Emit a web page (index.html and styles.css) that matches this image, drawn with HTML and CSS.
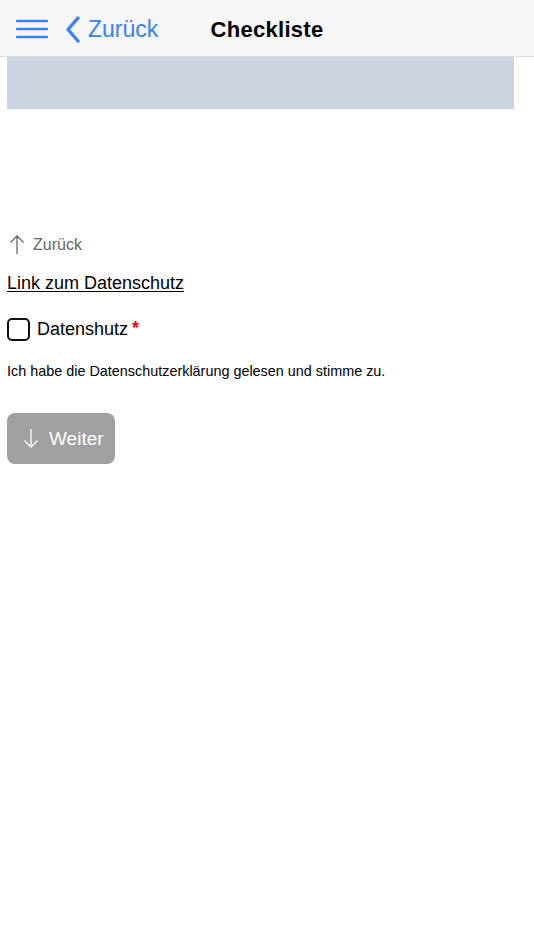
FILE: index.html
```html
<!DOCTYPE html>
<html lang="de">
<head>
    <meta charset="UTF-8">
    <meta name="viewport" content="width=device-width, initial-scale=1.0">
    <title>Checkliste</title>
    <link rel="stylesheet" href="styles.css">
</head>
<body>
    <!-- Top bar -->
    <header class="topbar">
        <div class="topbar-left">
            <svg class="menu-icon" width="32" height="20" viewBox="0 0 32 20">
                <path d="M1 2h30M1 10h30M1 18h30" stroke="#3b82f6" stroke-width="2.6" stroke-linecap="round"/>
            </svg>
            <a class="back-link" href="#">
                <svg width="16" height="27" viewBox="0 0 16 27">
                    <path d="M13 2L3 13.5L13 25" fill="none" stroke="#3b82f6" stroke-width="3.4" stroke-linecap="round" stroke-linejoin="round"/>
                </svg>
                <span>Zurück</span>
            </a>
        </div>
        <h1 class="title">Checkliste</h1>
    </header>

    <div class="banner"></div>

    <main class="content">
        <a class="step-back" href="#">
            <svg width="16" height="19" viewBox="0 0 16 19">
                <path d="M8 1v18M1.5 7.5L8 1l6.5 6.5" fill="none" stroke="#666" stroke-width="1.3"/>
            </svg>
            <span>Zurück</span>
        </a>

        <a class="privacy-link" href="#">Link zum Datenschutz</a>

        <label class="check-row">
            <span class="checkbox"></span>
            <span>Datenshutz</span>
            <span class="required">*</span>
        </label>

        <p class="note">Ich habe die Datenschutzerklärung gelesen und stimme zu.</p>

        <button class="next-button" disabled>
            <svg width="16" height="19" viewBox="0 0 16 19">
                <path d="M8 0v18M1.5 11.5L8 18l6.5-6.5" fill="none" stroke="#fff" stroke-width="1.3"/>
            </svg>
            <span>Weiter</span>
        </button>
    </main>
</body>
</html>
```

FILE: styles.css
```css
/* base */
body {
    margin: 0;
    font-family: "Liberation Sans", Arial, sans-serif;
    color: #000;
    background: #fff;
}

/* top bar */
.topbar {
    position: relative;
    height: 57px;
    box-sizing: border-box;
    padding-top: 3px;
    background-color: #f6f6f6;
    border-bottom: 1px solid #dcdcdc;
    display: flex;
    align-items: center;
    justify-content: center;
}

.topbar-left {
    position: absolute;
    left: 16px;
    top: 3px;
    bottom: 0;
    display: flex;
    align-items: center;
}

.menu-icon {
    display: block;
    margin-top: -1px;
}

.back-link {
    display: flex;
    align-items: center;
    margin-left: 17px;
    color: #3b82f6;
    text-decoration: none;
    font-size: 23px;
}

.back-link svg {
    display: block;
    margin-right: 7px;
}

.title {
    margin: 0;
    font-size: 22px;
    font-weight: bold;
    letter-spacing: 0.3px;
}

/* grey placeholder image */
.banner {
    height: 52px;
    margin: 0 20px 0 7px;
    background-color: #cdd5e0;
}

/* form content */
.content {
    padding: 126px 7px 0 7px;
}

.step-back {
    display: flex;
    align-items: center;
    color: #666;
    text-decoration: none;
    font-size: 16px;
}

.step-back svg {
    display: block;
    margin: 0 8px 0 2px;
}

.privacy-link {
    display: inline-block;
    margin-top: 19px;
    color: #000;
    font-size: 18px;
    text-decoration: underline;
    text-underline-offset: 2px;
}

.check-row {
    display: flex;
    align-items: center;
    margin-top: 24px;
    font-size: 18px;
}

.checkbox {
    width: 19px;
    height: 19px;
    border: 2px solid #111;
    border-radius: 5px;
    margin-right: 7px;
}

.required {
    color: #e00;
    font-weight: bold;
    margin-left: 4px;
    margin-top: -2px;
}

.note {
    margin: 22px 0 0 0;
    font-size: 14.4px;
}

.next-button {
    display: flex;
    align-items: center;
    margin-top: 34px;
    width: 108px;
    height: 51px;
    padding: 0 0 0 16px;
    border: none;
    border-radius: 8px;
    background-color: #a0a0a0;
    color: #fff;
    font-family: "Liberation Sans", Arial, sans-serif;
    font-size: 19px;
}

.next-button svg {
    display: block;
    margin-right: 10px;
}
```
